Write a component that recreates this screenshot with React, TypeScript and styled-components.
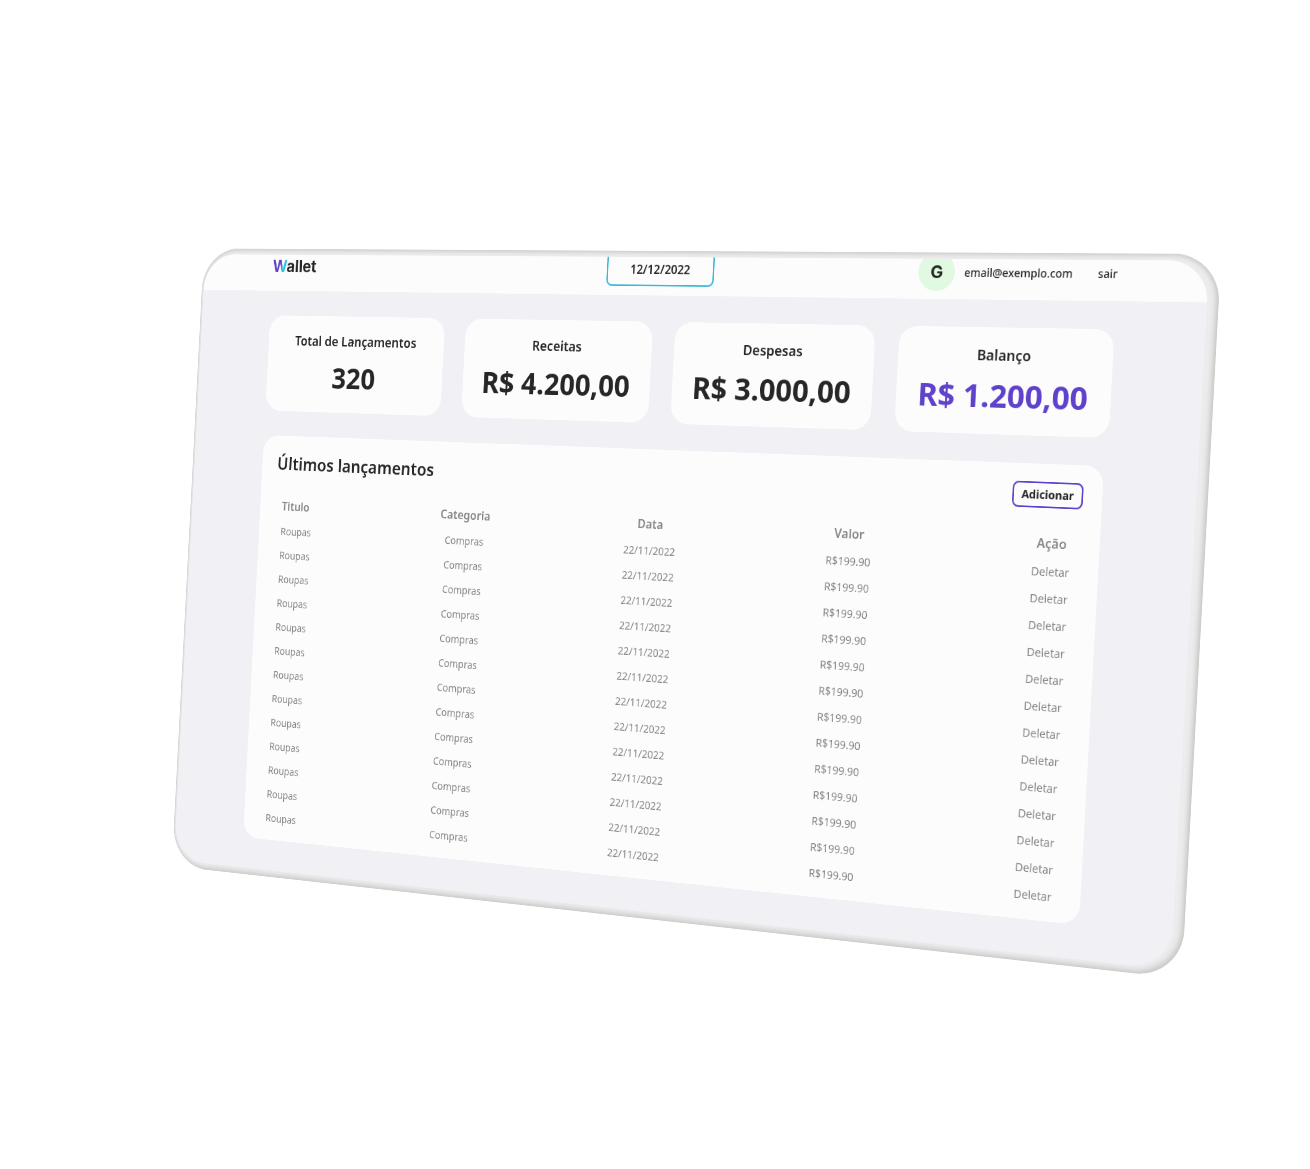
import React from "react";
import styled, { createGlobalStyle } from "styled-components";

type Point = [number, number];

/** Builds the matrix3d that carries a flat rectangle onto four corners. */
function projectOnto(
  rect: { x: number; y: number; width: number; height: number },
  [p0, p1, p2, p3]: [Point, Point, Point, Point]
) {
  const sx = p0[0] - p1[0] + p2[0] - p3[0];
  const sy = p0[1] - p1[1] + p2[1] - p3[1];
  const dx1 = p1[0] - p2[0];
  const dy1 = p1[1] - p2[1];
  const dx2 = p3[0] - p2[0];
  const dy2 = p3[1] - p2[1];
  const den = dx1 * dy2 - dx2 * dy1;
  const g = (sx * dy2 - dx2 * sy) / den;
  const h = (dx1 * sy - sx * dy1) / den;
  const rows = [
    [p1[0] - p0[0] + g * p1[0], p3[0] - p0[0] + h * p3[0], p0[0]],
    [p1[1] - p0[1] + g * p1[1], p3[1] - p0[1] + h * p3[1], p0[1]],
    [g, h, 1],
  ].map(([a, b, c]) => {
    const u = a / rect.width;
    const v = b / rect.height;
    return [u, v, c - u * rect.x - v * rect.y];
  });
  const [X, Y, W] = rows;
  const cells = [
    X[0], Y[0], 0, W[0],
    X[1], Y[1], 0, W[1],
    0, 0, 1, 0,
    X[2], Y[2], 0, W[2],
  ];
  return `matrix3d(${cells.map((n) => n.toFixed(9)).join(",")})`;
}

const tilt = projectOnto({ x: 115, y: 258, width: 1200, height: 558 }, [
  [264, 435],
  [1104, 466],
  [1079, 925],
  [243, 837],
]);

const colors = {
  ink: "#272727",
  muted: "#868686",
  surface: "#fcfcfc",
  page: "#f0f0f5",
  purple: "#5f41cb",
  cyan: "#38b9d9",
  mint: "#e0f9e0",
};

const GlobalStyle = createGlobalStyle`
  *, *::before, *::after { box-sizing: border-box; }
  body {
    margin: 0;
    background: #fff;
    color: ${colors.ink};
    font-family: "Noto Sans", "Open Sans", sans-serif;
  }
  button, input { font: inherit; color: inherit; }
`;

const Stage = styled.div`
  min-height: 100vh;
  overflow: hidden;
`;

const Device = styled.div`
  width: max-content;
  padding: 8px 14px 9px 3px;
  border-radius: 58px;
  outline: 4px solid transparent;
  background: #ececec;
  box-shadow: inset -3px -3px 7px #c6c6c6, inset 0 3px 5px #d2d2d2,
    inset 1px 0 2px #dadada;
  transform: ${tilt};
  transform-origin: 0 0;
`;

const Screen = styled.div`
  padding-bottom: 42px;
  border-radius: 50px;
  overflow: hidden;
  background: ${colors.page};
`;

const Header = styled.header`
  display: grid;
  grid-template-columns: 515px 154px 1fr;
  align-items: center;
  height: 68px;
  margin-top: -18px;
  padding: 0 112px;
  background: ${colors.surface};
`;

const Logo = styled.span`
  font: 700 23px/32px Inter, sans-serif;
`;

const LogoInitial = styled.span`
  color: transparent;
  background: linear-gradient(100deg, ${colors.purple} 55%, #2fc3e0 68%);
  background-clip: text;
`;

const DateField = styled.input`
  width: 100%;
  height: 44px;
  border: 2px solid ${colors.cyan};
  border-radius: 8px;
  background: transparent;
  font-size: 16px;
  font-weight: 600;
  text-align: center;
`;

const Account = styled.div`
  display: flex;
  align-items: center;
  justify-content: flex-end;
  gap: 12px;
  font-size: 14px;
  font-weight: 500;
`;

const Avatar = styled.span`
  width: 48px;
  height: 48px;
  border-radius: 50%;
  background: ${colors.mint};
  font: 700 22px/48px Inter, sans-serif;
  text-align: center;
`;

const SignOut = styled.a`
  margin-left: 20px;
  color: inherit;
  text-decoration: none;
`;

const Content = styled.main`
  display: grid;
  gap: 34px;
  width: 1428px;
  padding: 34px 112px 0;
`;

const Summary = styled.section`
  display: grid;
  grid-template-columns: repeat(4, 1fr);
  gap: 32px;
`;

const Card = styled.article`
  display: grid;
  gap: 14px;
  padding: 22px 0 24px;
  border-radius: 24px;
  background: ${colors.surface};
  text-align: center;
`;

const CardLabel = styled.h2`
  margin: 0;
  font-size: 18px;
  line-height: 24px;
  font-weight: 600;
`;

const CardValue = styled.p<{ $accent?: boolean }>`
  margin: 0;
  font-size: 40px;
  line-height: 48px;
  font-weight: 700;
  white-space: nowrap;
  color: ${({ $accent }) => ($accent ? colors.purple : "inherit")};
`;

const Panel = styled.section`
  margin-right: 4px;
  padding: 22px 24px 14px;
  border-radius: 24px;
  background: ${colors.surface};
`;

const PanelHead = styled.div`
  display: flex;
  align-items: center;
  justify-content: space-between;
  margin-bottom: 25px;
`;

const PanelTitle = styled.h2`
  margin: 0;
  font-size: 24px;
  line-height: 32px;
  font-weight: 600;
`;

const AddButton = styled.button`
  width: 90px;
  height: 32px;
  padding: 0;
  border: 2px solid ${colors.purple};
  border-radius: 8px;
  background: transparent;
  font-size: 14px;
  line-height: 20px;
  font-weight: 700;
`;

const Table = styled.table`
  width: 1130px;
  margin: 0 11px;
  border-collapse: collapse;
  table-layout: fixed;
  color: ${colors.muted};
  text-align: center;

  th, td { padding: 0; }
  th:first-child, td:first-child { text-align: left; }
  th:last-child, td:last-child { padding-left: 100px; }
`;

const HeadCell = styled.th<{ $width: number }>`
  width: ${({ $width }) => $width}px;
  height: 36px;
  font-size: 16px;
  line-height: 24px;
  font-weight: 600;
`;

const Cell = styled.td`
  height: 33px;
  font-size: 14px;
  line-height: 20px;
  font-weight: 400;
`;

const DeleteButton = styled.button`
  padding: 0;
  border: 0;
  background: none;
  line-height: 20px;
`;

const columns = [
  { name: "Titulo", width: 152 },
  { name: "Categoria", width: 273 },
  { name: "Data", width: 275 },
  { name: "Valor", width: 279 },
  { name: "Ação", width: 151 },
];

const totals = [
  { label: "Total de Lançamentos", value: "320" },
  { label: "Receitas", value: "R$ 4.200,00" },
  { label: "Despesas", value: "R$ 3.000,00" },
  { label: "Balanço", value: "R$ 1.200,00", accent: true },
];

const entries = Array.from({ length: 13 }, (_, id) => ({
  id,
  title: "Roupas",
  category: "Compras",
  date: "22/11/2022",
  value: "R$199.90",
}));

export default function App() {
  return (
    <Stage>
      <GlobalStyle />
      <Device>
        <Screen>
          <Header>
            <Logo>
              <LogoInitial>W</LogoInitial>allet
            </Logo>
            <DateField aria-label="Data" defaultValue="12/12/2022" />
            <Account>
              <Avatar>G</Avatar>
              <span>email@exemplo.com</span>
              <SignOut href="#sair">sair</SignOut>
            </Account>
          </Header>
          <Content>
            <Summary>
              {totals.map((t) => (
                <Card key={t.label}>
                  <CardLabel>{t.label}</CardLabel>
                  <CardValue $accent={t.accent}>{t.value}</CardValue>
                </Card>
              ))}
            </Summary>
            <Panel>
              <PanelHead>
                <PanelTitle>Últimos lançamentos</PanelTitle>
                <AddButton type="button">Adicionar</AddButton>
              </PanelHead>
              <Table>
                <thead>
                  <tr>
                    {columns.map((c) => (
                      <HeadCell key={c.name} $width={c.width} scope="col">
                        {c.name}
                      </HeadCell>
                    ))}
                  </tr>
                </thead>
                <tbody>
                  {entries.map((e) => (
                    <tr key={e.id}>
                      <Cell>{e.title}</Cell>
                      <Cell>{e.category}</Cell>
                      <Cell>{e.date}</Cell>
                      <Cell>{e.value}</Cell>
                      <Cell>
                        <DeleteButton type="button">Deletar</DeleteButton>
                      </Cell>
                    </tr>
                  ))}
                </tbody>
              </Table>
            </Panel>
          </Content>
        </Screen>
      </Device>
    </Stage>
  );
}
